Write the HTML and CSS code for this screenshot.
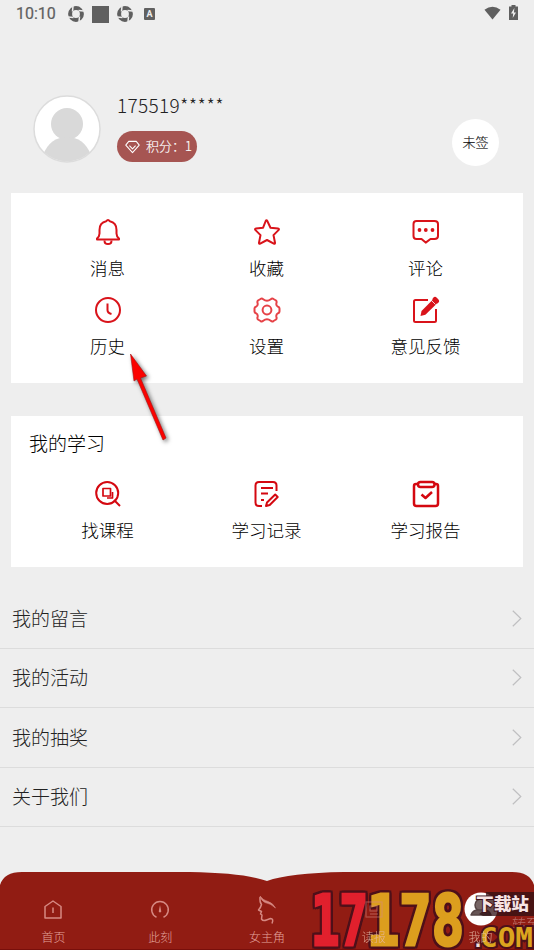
FILE: index.html
```html
<!DOCTYPE html>
<html lang="zh-CN">
<head>
<meta charset="utf-8">
<title>我的</title>
<link rel="stylesheet" href="styles.css">
</head>
<body>
<div class="screen">
  <header class="status">
    <span class="clock">10:10</span>
    <svg class="s-ball" viewBox="0 0 16 16"><circle cx="8" cy="8" r="5.900" fill="none" stroke="currentColor" stroke-width="4"/><path d="M5 0 4.500 5.500M16 5l-5.500-.5M11 16l.5-5.500M0 11l5.500.5" stroke="#eee" stroke-width="1.500"/></svg>
    <span class="s-square"></span>
    <svg class="s-ball" viewBox="0 0 16 16"><circle cx="8" cy="8" r="5.900" fill="none" stroke="currentColor" stroke-width="4"/><path d="M5 0 4.500 5.500M16 5l-5.500-.5M11 16l.5-5.500M0 11l5.500.5" stroke="#eee" stroke-width="1.500"/></svg>
    <span class="s-a">A</span>
    <svg class="s-wifi" viewBox="0 0 18 14"><path d="M.5 3.5Q9-3 17.500 3.500L9 14z" fill="currentColor"/></svg>
    <svg class="s-battery" viewBox="0 0 9 15"><path d="M2.500 0h4v1.500H9V15H0V1.500h2.500z" fill="currentColor"/><path d="M5.400 3 2 8.500h2.200L3.700 13 7 7.500H4.900z" fill="#eee"/></svg>
  </header>

  <section class="profile">
    <svg class="avatar" viewBox="0 0 68 68"><defs><clipPath id="face"><circle cx="34" cy="34" r="32.500"/></clipPath></defs><circle cx="34" cy="34" r="33" fill="#fff" stroke="#dcdcdc" stroke-width="1.500"/><g fill="#d9d9d9" clip-path="url(#face)"><circle cx="34" cy="29" r="16"/><path d="M10 68V60Q17 42 34 42t24 18v8z"/></g></svg>
    <div class="who">
      <div class="name">175519*****</div>
      <div class="points"><svg viewBox="0 0 16 14"><path d="M4 1h8l3.200 4L8 13 .8 5zM4.700 5.500 8 9l3.300-3.500" fill="none" stroke="currentColor" stroke-width="1.100" stroke-linejoin="round"/></svg><span>积分：1</span></div>
    </div>
    <div class="sign">未签</div>
  </section>

  <section class="card main">
    <div class="grid">
      <div class="item"><svg viewBox="0 0 28 28"><path d="M3 20.500q2.500-2 2.500-5V12C5.500 7 8.500 4 12.200 3.300Q14 .5 15.800 3.300C19.500 4 22.500 7 22.500 12v3.500q0 3 2.500 5v1H3z"/><path d="M10.500 22.500c0 4.800 7 4.800 7 0"/></svg><span>消息</span></div>
      <div class="item"><svg viewBox="0 0 28 28"><path d="M12.700 3q.8-1.600 1.600 0l3.200 6.700 7.500.9q1.600.3.500 1.500l-5 5 1.500 7.600q.2 1.500-1.200.9L14 22l-6.800 3.600q-1.400.6-1.200-.9l1.500-7.600-5-5q-1.100-1.200.5-1.500l7.100-.9z"/></svg><span>收藏</span></div>
      <div class="item"><svg viewBox="0 0 28 28"><path d="M4.500 3h18Q26 3 26 6v12q0 3-3.500 3h-4l-4.800 3.600L9.500 21h-5Q1.500 21 1.500 18V6q0-3 3-3z"/><g fill="currentColor" stroke="none"><circle cx="7.500" cy="12" r="1.900"/><circle cx="13.800" cy="12" r="1.900"/><circle cx="20.500" cy="12" r="1.900"/></g></svg><span>评论</span></div>
      <div class="item"><svg viewBox="0 0 28 28"><circle cx="14" cy="14" r="12"/><path d="M13.500 7.500V14q0 3 4 4"/></svg><span>历史</span></div>
      <div class="item gear"><svg viewBox="0 0 28 28"><path d="M7.500 3q1.300-1.200 2.700.2 3.800 3 7.600 0 1.400-1.400 2.700-.2l2.500 1.500q1 1 .4 2.700-.6 2.600 1.700 3.600 1.500.5 1.400 2v2.400q.1 1.500-1.400 2-2.300 1-1.700 3.600.6 1.700-.4 2.700L20.500 25q-1.300 1.200-2.700-.2-3.800-3-7.600 0-1.400 1.400-2.700.2L5 23.500q-1-1-.4-2.700.6-2.600-1.700-3.600-1.500-.5-1.400-2v-2.400q-.1-1.500 1.400-2 2.300-1 1.700-3.600Q4 5.500 5 4.500z"/><circle cx="14" cy="14" r="4.400"/></svg><span>设置</span></div>
      <div class="item"><svg viewBox="0 0 28 28"><path d="M16 4H3.500Q2 4 2 5.500v19Q2 26 3.500 26h19q1.500 0 1.500-1.500V13"/><path d="m8.500 20 1-5L20.700 3.700l4 4-11.300 11z" fill="currentColor" stroke="none"/><path d="m23 3.500 1.500 1.500" stroke-width="5" stroke-linecap="round"/><path d="m19.500 4.500 4 4" stroke="#fff" stroke-width=".8"/></svg><span>意见反馈</span></div>
    </div>
  </section>

  <section class="card study">
    <h2>我的学习</h2>
    <div class="grid">
      <div class="item"><svg viewBox="0 0 28 28"><circle cx="13.200" cy="13" r="11"/><path d="m20 20 6 6"/><path d="M9 8.500h7.500V16H9z" stroke-width="1.700"/><path d="M18.500 12v6H13" stroke-width="1.700"/></svg><span>找课程</span></div>
      <div class="item"><svg viewBox="0 0 28 28"><path d="M9 26H6q-3.500 0-3.500-3.500v-17Q2.500 2 6 2h14q3.500 0 3.500 3.500V11M8 8h12M8 13.500h7M8 20h3M14 22.500l8.200-8 2.500 2.500-8 8-3.700 1z"/></svg><span>学习记录</span></div>
      <div class="item report"><svg viewBox="0 0 28 28"><path d="M6 4H4Q2 4 2 6v17.500Q2 26 4.500 26h19q2.500 0 2.500-2.500V6q0-2-2-2h-2"/><rect x="6" y="2" width="16.500" height="5" rx="2.500"/><path d="m9.500 14.500 4 3.500 6.500-6"/></svg><span>学习报告</span></div>
    </div>
  </section>

  <ul class="list">
    <li><span>我的留言</span><svg viewBox="0 0 10 17"><path d="m.8.800 8 7.700-8 7.700"/></svg></li>
    <li><span>我的活动</span><svg viewBox="0 0 10 17"><path d="m.8.800 8 7.700-8 7.700"/></svg></li>
    <li><span>我的抽奖</span><svg viewBox="0 0 10 17"><path d="m.8.800 8 7.700-8 7.700"/></svg></li>
    <li><span>关于我们</span><svg viewBox="0 0 10 17"><path d="m.8.800 8 7.700-8 7.700"/></svg></li>
  </ul>

  <nav class="tabs">
    <svg class="tabs-bg" viewBox="0 0 534 78"><path d="M0 78V13Q4 0 22 0h168q55 1 77 9 22-8 77-9h168q18 0 22 13v65z" fill="#911c13"/><path d="M0 77.500h534" stroke="#780f0b"/></svg>
    <div class="tab"><svg viewBox="0 0 28 28"><path d="M6 10.500 14 5l8 5.500V22H6zM14 11.500v5.500"/></svg><span>首页</span></div>
    <div class="tab"><svg viewBox="0 0 28 28"><path d="M10.500 21.300a8.300 8.300 0 1 1 7 0"/><path d="m14 9 1.300 6.500q-1.300 2-2.600 0z" fill="currentColor" stroke="none"/></svg><span>此刻</span></div>
    <div class="tab"><svg viewBox="0 0 28 28"><path d="M7 0q3.500 4.500 7.500 5.300Q20 7 22.500 12 18 7.500 12 6.500 8.500 5 7 0z" fill="currentColor" stroke-width=".6"/><path d="M7 1q-.5 5 1.500 7.500Q8 11 5.500 14l3 1.500-1 2.500 1.500 1-.5 4q1.500 2.500 5 1l4-1.500q3.500 0 1.500 5"/></svg><span>女主角</span></div>
    <div class="tab read"><svg viewBox="0 0 28 28"><path d="M6 6h16v15H6zM10 10h7v5h-7zM10 18h8"/></svg><span>读报</span></div>
    <div class="tab me"><svg viewBox="0 0 34 34"><circle cx="17" cy="17" r="16.500" fill="#fff" stroke="none"/><circle cx="17" cy="13" r="6" fill="#766" stroke="#544"/><path d="M7 23q2-5 7-5h6q5 0 7 5z" fill="#655" stroke="#544"/></svg><span>我的</span></div>
  </nav>

  <svg class="watermark" viewBox="0 0 234 78">
    <g class="system"><text x="212" y="34">邀</text><text x="212" y="57">转至</text></g>
    <g class="digits"><text class="red" x="11" y="73" textLength="57" lengthAdjust="spacingAndGlyphs">17</text><text class="gold" x="67" y="73" textLength="97" lengthAdjust="spacingAndGlyphs">178</text></g>
    <path d="M186 20h48v24h-51l-4-2 7-5z" fill="#301014" opacity=".75"/>
    <text class="site" x="176" y="38" textLength="53" lengthAdjust="spacingAndGlyphs">下载站</text>
    <text class="dot" x="172" y="75">.</text>
    <text class="com" x="180" y="75" textLength="53" lengthAdjust="spacingAndGlyphs">COM</text>
  </svg>

  <svg class="pointer" viewBox="0 0 60 110"><path d="m10.500 14 16 22-6 2L46 98l-3 2-26-61-3 2z" fill="#fb0200" stroke="#a21414" stroke-width=".6"/></svg>
</div>
</body>
</html>
```
FILE: styles.css
```css
* { box-sizing: border-box; }
body { margin: 0; background: #eee; font-family: "Noto Sans CJK SC", sans-serif; font-weight: 300; color: #222; }
.screen { position: relative; width: 534px; height: 950px; overflow: hidden; background: #eee; display: flex; flex-direction: column; }
svg { display: block; flex: none; }

.status { height: 28px; padding: 0 16px 0 16px; display: flex; align-items: center; color: #5f5f5f; }
.clock { width: 52px; font: 400 16px/28px Roboto, sans-serif; letter-spacing: 0; -webkit-text-stroke: .2px #5f5f5f; }
.s-ball { width: 16px; height: 16px; }
.s-square { width: 17px; height: 17px; margin: 0 8px; background: #606060; }
.s-a { width: 11px; height: 12px; margin: -1px 0 0 11px; border-radius: 1px; background: #606060; color: #eee; font: 700 9px/12px Roboto, sans-serif; text-align: center; }
.s-wifi { width: 17px; height: 14px; margin: -2px 8px 0 auto; }
.s-battery { width: 9px; height: 15px; margin-top: -3px; }

.profile { height: 165px; padding: 66px 35px 0 33px; display: flex; align-items: flex-start; }
.avatar { width: 68px; height: 68px; margin-top: .5px; }
.who { margin-left: 16px; }
.name { height: 38px; margin-top: -2px; font-size: 19px; line-height: 25px; letter-spacing: .35px; white-space: nowrap; }
.points { width: 80px; height: 31px; margin-top: 1px; padding-left: 8px; border-radius: 16px; background: #a65552; color: #fff; display: flex; align-items: center; gap: 6px; font-size: 13px; line-height: 27px; white-space: nowrap; }
.points span { margin-top: -2px; -webkit-text-stroke: .15px #fff; }
.points svg { width: 15px; height: 14px; }
.sign { width: 47px; height: 47px; margin: 25px 0 0 auto; border-radius: 50%; background: #fff; font-size: 13px; line-height: 46px; text-align: center; color: #111; -webkit-text-stroke: .15px #111; }

.card { margin: 0 11px; background: #fff; flex: none; }
.grid { display: grid; grid-template-columns: repeat(3, 159px); grid-auto-rows: 78px; margin: 0 17px; color: #d9131a; }
.item { display: flex; flex-direction: column; align-items: center; }
.item svg { width: 28px; height: 28px; fill: none; stroke: currentColor; stroke-width: 2; stroke-linejoin: round; }
.item span { margin-top: 9px; font-size: 17.500px; line-height: 26px; color: #000; }
.gear { color: #e64247; }
.report svg { stroke-width: 2.500; }
.main { height: 190px; padding-top: 25px; }
.study { height: 151px; margin-top: 33px; }
.study .grid { color: #d40810; }
.study h2 { height: 64px; margin: 0; padding: 13px 0 0 18px; font-size: 19px; line-height: 27px; font-weight: 300; color: #000; }

.list { list-style: none; margin: 22px 0 0; padding: 0; }
.list li { height: 59.500px; padding: 0 12px; border-bottom: 1px solid #dcdcdc; display: flex; align-items: center; justify-content: space-between; font-size: 19px; }
.list span { margin-top: -2px; }
.list svg { width: 10px; height: 17px; fill: none; stroke: #bfbfc1; stroke-width: 1.200; }

.tabs { position: relative; height: 78px; margin-top: auto; display: grid; grid-template-columns: repeat(5, 1fr); }
.tabs-bg { position: absolute; inset: 0; width: 534px; height: 78px; }
.tab { position: relative; display: flex; flex-direction: column; align-items: center; padding-top: 24px; color: #d68983; font-size: 12px; line-height: 18px; }
.tab svg { width: 28px; height: 28px; fill: none; stroke: currentColor; stroke-width: 1.500; stroke-linejoin: round; }
.tab span { position: relative; z-index: 2; margin-top: 4px; color: #e3a29c; }
.read { z-index: 2; }
.read svg { opacity: .4; }
.read span { color: #e9b9a4; opacity: .85; }
.me { padding-top: 20px; }
.me svg { width: 34px; height: 34px; }
.me span { margin-top: 2px; color: #efcdb8; opacity: .8; }

.watermark { position: absolute; z-index: 1; left: 300px; top: 872px; width: 234px; height: 78px; }
.digits text { font: 700 69px "DejaVu Sans Mono", monospace; stroke-width: 3px; stroke-linejoin: miter; filter: drop-shadow(2px 0 0 #4e1019) drop-shadow(-2px 0 0 #4e1019) drop-shadow(0 2px 0 #4e1019) drop-shadow(0 -2px 0 #4e1019); }
.digits .red { fill: #e1202d; stroke: #e1202d; }
.digits .gold { fill: #dc9e1e; stroke: #dc9e1e; }
.site { font: 900 17px "Noto Sans CJK SC", sans-serif; fill: #f6e4e4; stroke: #42121a; stroke-width: 2px; paint-order: stroke; }
.com, .dot { font: 700 27px "DejaVu Sans Mono", monospace; fill: #dca51e; stroke: #4e1019; stroke-width: 4px; paint-order: stroke; }
.dot { font-size: 20px; fill: #f1dedb; }
.system { font-size: 14px; fill: #c98f8a; opacity: .7; }
.pointer { position: absolute; left: 120px; top: 340px; width: 60px; height: 110px; filter: drop-shadow(2px 2px 2px rgba(0, 0, 0, .55)); }
```
